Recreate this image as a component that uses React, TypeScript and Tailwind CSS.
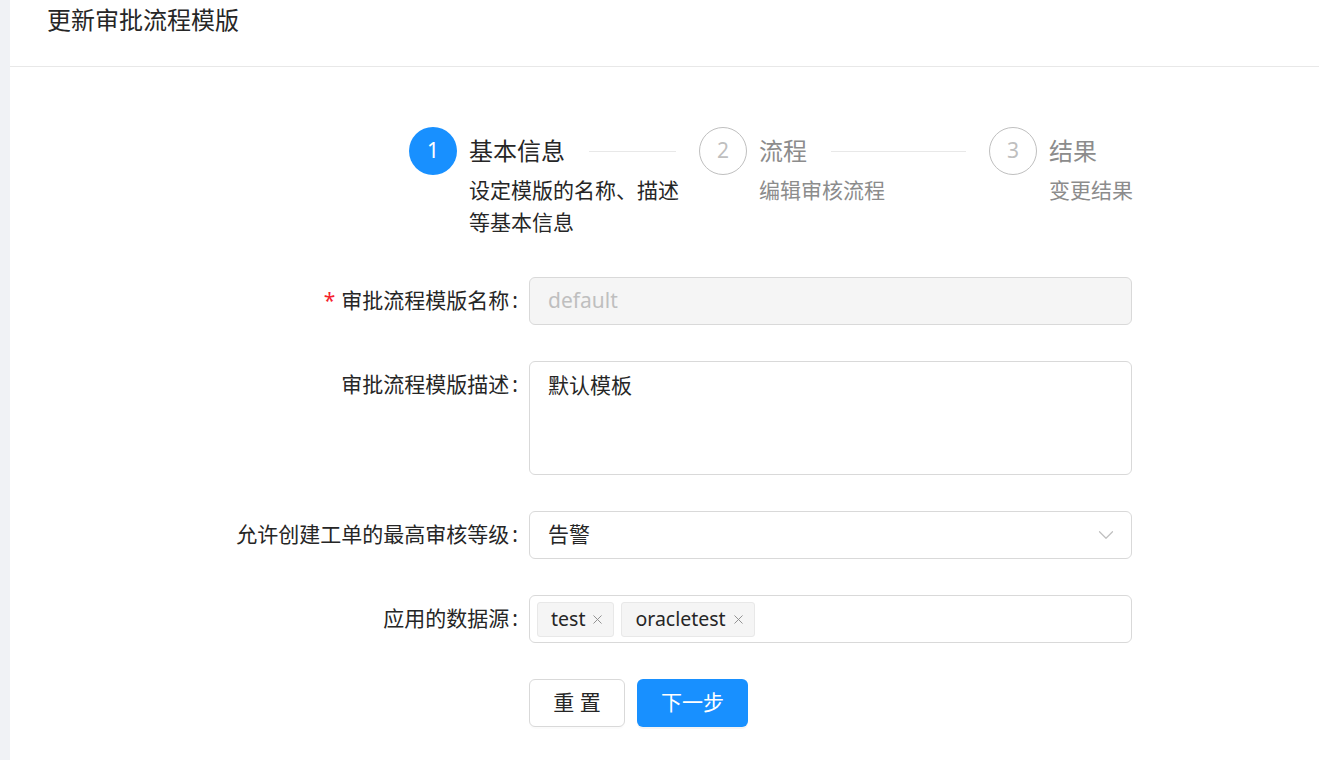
import { ChevronDown, X } from 'lucide-react'

const font = { fontFamily: '"Noto Sans", "Noto Sans CJK SC", sans-serif' }

type Step = {
  num: number
  title: string
  desc: string
  active?: boolean
  last?: boolean
}

const steps: Step[] = [
  { num: 1, title: '基本信息', desc: '设定模版的名称、描述等基本信息', active: true },
  { num: 2, title: '流程', desc: '编辑审核流程' },
  { num: 3, title: '结果', desc: '变更结果', last: true },
]

function StepItem({ step }: { step: Step }) {
  return (
    <div className={step.last ? 'flex flex-none' : 'flex w-[267px] mr-[23px]'}>
      <div
        className={`h-[48px] w-[48px] flex-none rounded-full flex items-center justify-center text-[21px] ${
          step.active
            ? 'bg-[#1890ff] text-white'
            : 'border-[1.5px] border-[#bfbfbf] text-[#bfbfbf]'
        }`}
      >
        {step.num}
      </div>
      <div className="ml-[12px] flex-1 min-w-0">
        <div className="flex items-center h-[48px]">
          <span
            className={`text-[24px] leading-[48px] whitespace-nowrap ${
              step.active ? 'text-[#262626]' : 'text-[#8c8c8c]'
            }`}
          >
            {step.title}
          </span>
          {!step.last && <div className="ml-[24px] flex-1 h-px bg-[#e8e8e8]" />}
        </div>
        <div
          className={`w-[218px] text-[21px] leading-[31.5px] ${
            step.active ? 'text-[#262626]' : 'text-[#8c8c8c]'
          }`}
        >
          {step.desc}
        </div>
      </div>
    </div>
  )
}

function Label({ text, required }: { text: string; required?: boolean }) {
  return (
    <div className="w-[519px] flex-none flex justify-end items-center h-[48px] text-[21px] text-[#262626]">
      {required && <span className="text-[#f5222d] mr-[6px] text-[21px]">*</span>}
      <span>{text}</span>
      <span className="ml-[3px] mr-[11px]">:</span>
    </div>
  )
}

function Tag({ text }: { text: string }) {
  return (
    <div className="flex items-center h-[35px] pl-[13px] pr-[8px] bg-[#f5f5f5] border border-[#e8e8e8] rounded-[3px] text-[19.5px] text-[#262626]">
      <span>{text}</span>
      <X className="ml-[5px] h-[15px] w-[15px] text-[#8c8c8c]" strokeWidth={1.5} />
    </div>
  )
}

export default function App() {
  return (
    <div className="flex min-h-[760px] bg-white" style={font}>
      <div className="w-[10px] flex-none bg-[#f0f2f5]" />
      <div className="flex-1 bg-white">
        <div className="h-[67px] border-b border-[#e8e8e8] pl-[37px] pt-[6px]">
          <h1 className="text-[24px] leading-[28px] text-[#262626]">更新审批流程模版</h1>
        </div>

        <div className="mt-[60px] ml-[399px] flex">
          {steps.map((s) => (
            <StepItem key={s.num} step={s} />
          ))}
        </div>

        <div className="mt-[39px] flex flex-col gap-[36px]">
          <div className="flex">
            <Label text="审批流程模版名称" required />
            <div className="w-[603px] h-[48px] rounded-[6px] border border-[#d9d9d9] bg-[#f5f5f5] flex items-center px-[18px] text-[21px] text-[#bfbfbf]">
              default
            </div>
          </div>

          <div className="flex">
            <Label text="审批流程模版描述" />
            <div className="w-[603px] h-[114px] rounded-[6px] border border-[#d9d9d9] bg-white px-[18px] pt-[8px] text-[21px] leading-[31.5px] text-[#262626]">
              默认模板
            </div>
          </div>

          <div className="flex">
            <Label text="允许创建工单的最高审核等级" />
            <div className="w-[603px] h-[48px] rounded-[6px] border border-[#d9d9d9] bg-white flex items-center justify-between pl-[18px] pr-[12px] text-[21px] text-[#262626]">
              <span>告警</span>
              <ChevronDown className="h-[26px] w-[26px] text-[#bfbfbf]" strokeWidth={1.1} />
            </div>
          </div>

          <div className="flex">
            <Label text="应用的数据源" />
            <div className="w-[603px] h-[48px] rounded-[6px] border border-[#d9d9d9] bg-white flex items-center pl-[7px] gap-[7px]">
              <Tag text="test" />
              <Tag text="oracletest" />
            </div>
          </div>

          <div className="flex">
            <div className="w-[519px] flex-none" />
            <button className="w-[96px] h-[48px] rounded-[6px] border border-[#d9d9d9] bg-white text-[21px] text-[#262626] shadow-[0_2px_0_rgba(0,0,0,0.015)]">
              重 置
            </button>
            <button className="ml-[12px] w-[111px] h-[48px] rounded-[6px] bg-[#1890ff] text-[21px] text-white shadow-[0_2px_0_rgba(0,0,0,0.045)]">
              下一步
            </button>
          </div>
        </div>
      </div>
    </div>
  )
}
